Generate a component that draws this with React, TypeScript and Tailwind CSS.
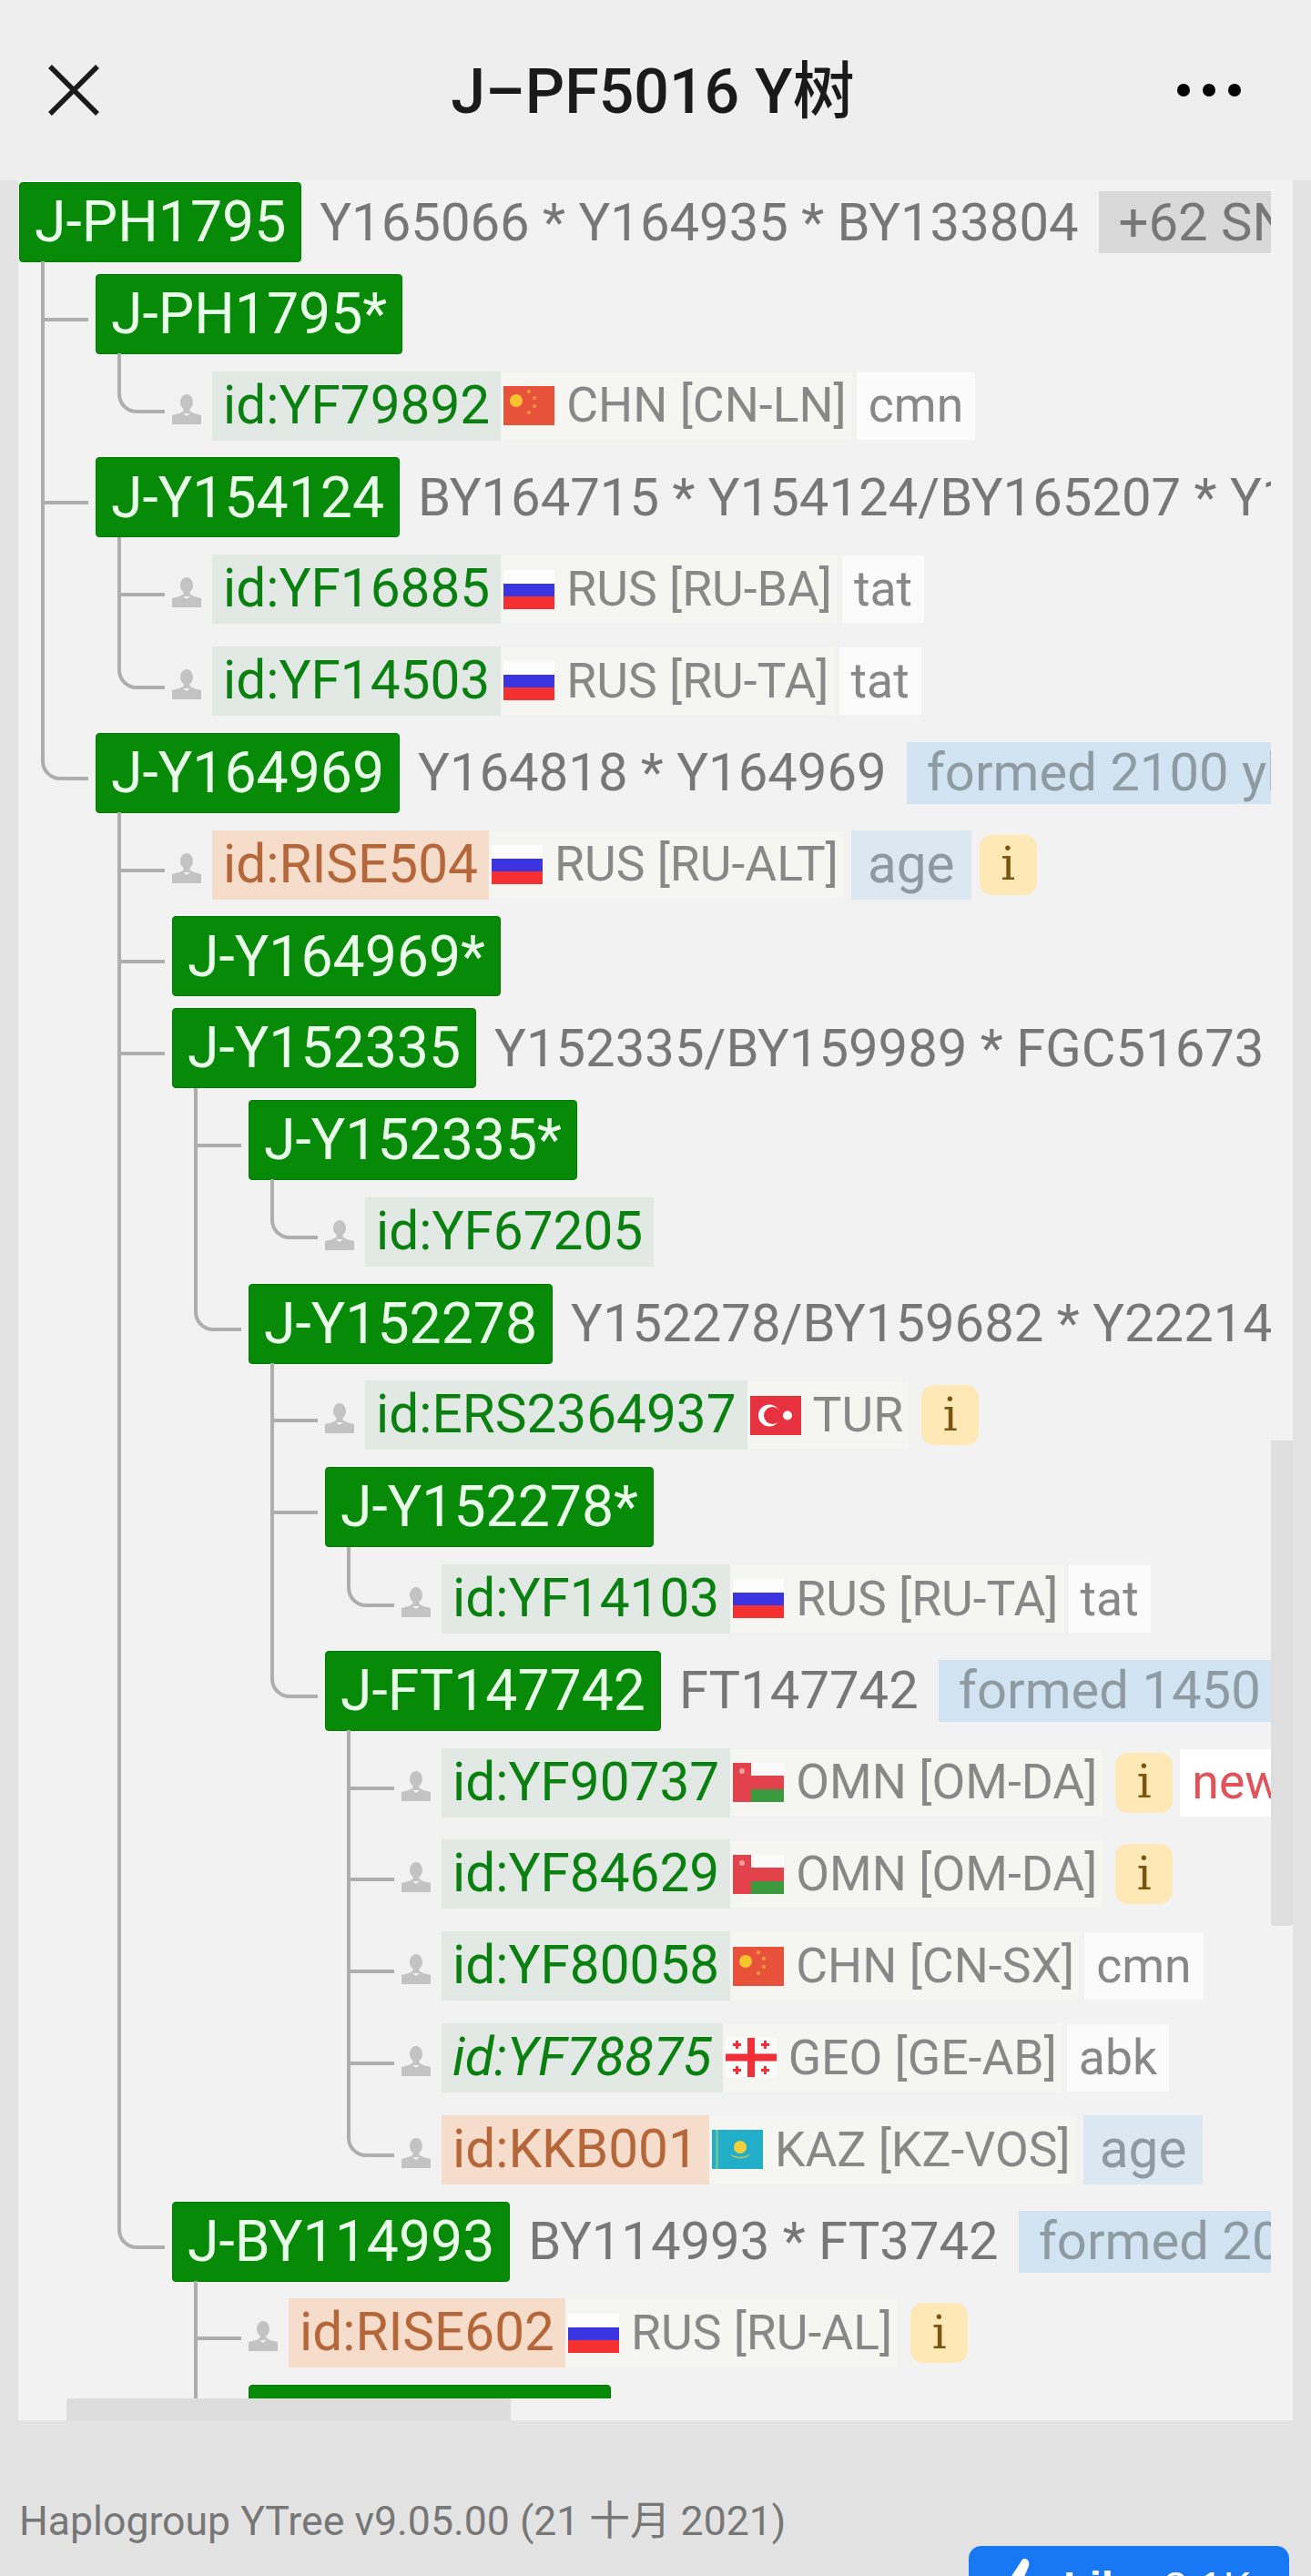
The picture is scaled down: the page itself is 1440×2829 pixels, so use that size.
import type { ReactNode } from "react";

type FlagName = "cn" | "ru" | "om" | "tr" | "ge" | "kz";

type Person = {
  id: string;
  tone?: "green" | "ancient";
  italic?: boolean;
  flag?: FlagName;
  country?: string;
  lang?: string;
  age?: boolean;
  info?: boolean;
  isNew?: boolean;
};

type Branch = {
  label: string;
  snps?: string;
  badge?: string;
  badgeGray?: boolean;
  kids?: TreeItem[];
};

type TreeItem = Branch | Person;

const tree: Branch = {
  label: "J-PH1795",
  snps: "Y165066 * Y164935 * BY133804",
  badge: "+62 SNPs",
  badgeGray: true,
  kids: [
    {
      label: "J-PH1795*",
      kids: [{ id: "id:YF79892", flag: "cn", country: "CHN [CN-LN]", lang: "cmn" }],
    },
    {
      label: "J-Y154124",
      snps: "BY164715 * Y154124/BY165207 * Y164971",
      kids: [
        { id: "id:YF16885", flag: "ru", country: "RUS [RU-BA]", lang: "tat" },
        { id: "id:YF14503", flag: "ru", country: "RUS [RU-TA]", lang: "tat" },
      ],
    },
    {
      label: "J-Y164969",
      snps: "Y164818 * Y164969",
      badge: "formed 2100 ybp",
      kids: [
        { id: "id:RISE504", tone: "ancient", flag: "ru", country: "RUS [RU-ALT]", age: true, info: true },
        { label: "J-Y164969*" },
        {
          label: "J-Y152335",
          snps: "Y152335/BY159989 * FGC51673",
          kids: [
            { label: "J-Y152335*", kids: [{ id: "id:YF67205" }] },
            {
              label: "J-Y152278",
              snps: "Y152278/BY159682 * Y22214",
              kids: [
                { id: "id:ERS2364937", flag: "tr", country: "TUR", info: true },
                {
                  label: "J-Y152278*",
                  kids: [{ id: "id:YF14103", flag: "ru", country: "RUS [RU-TA]", lang: "tat" }],
                },
                {
                  label: "J-FT147742",
                  snps: "FT147742",
                  badge: "formed 1450 ybp",
                  kids: [
                    { id: "id:YF90737", flag: "om", country: "OMN [OM-DA]", info: true, isNew: true },
                    { id: "id:YF84629", flag: "om", country: "OMN [OM-DA]", info: true },
                    { id: "id:YF80058", flag: "cn", country: "CHN [CN-SX]", lang: "cmn" },
                    { id: "id:YF78875", italic: true, flag: "ge", country: "GEO [GE-AB]", lang: "abk" },
                    { id: "id:KKB001", tone: "ancient", flag: "kz", country: "KAZ [KZ-VOS]", age: true },
                  ],
                },
              ],
            },
          ],
        },
        {
          label: "J-BY114993",
          snps: "BY114993 * FT3742",
          badge: "formed 2000 ybp",
          kids: [
            { id: "id:RISE602", tone: "ancient", flag: "ru", country: "RUS [RU-AL]", info: true },
            { label: "J-BY114993*" },
            { label: "J-BY114993.1" },
          ],
        },
      ],
    },
  ],
};

function Flag({ name }: { name: FlagName }) {
  return (
    <svg viewBox="0 0 56 43" className="h-[43px] w-[56px] flex-none">
      {name === "cn" && (
        <>
          <rect width="56" height="43" fill="#e8513a" />
          <circle cx="14" cy="16" r="7" fill="#f7c52e" />
          <circle cx="28" cy="6" r="2" fill="#f2a13a" />
          <circle cx="34" cy="13" r="2" fill="#f2a13a" />
          <circle cx="34" cy="22" r="2" fill="#f2a13a" />
          <circle cx="28" cy="29" r="2" fill="#f2a13a" />
        </>
      )}
      {name === "ru" && (
        <>
          <rect width="56" height="15" fill="#fdfdfd" />
          <rect y="15" width="56" height="14" fill="#3a35e0" />
          <rect y="29" width="56" height="14" fill="#f53030" />
        </>
      )}
      {name === "om" && (
        <>
          <rect width="56" height="14" fill="#fafafa" />
          <rect y="14" width="56" height="15" fill="#e2424c" />
          <rect y="29" width="56" height="14" fill="#3c9a3e" />
          <rect width="20" height="43" fill="#e2424c" />
          <circle cx="10" cy="9" r="3" fill="#f0a0a0" />
        </>
      )}
      {name === "tr" && (
        <>
          <rect width="56" height="43" fill="#e6323f" />
          <circle cx="21" cy="21.5" r="12" fill="#fff" />
          <circle cx="24.5" cy="21.5" r="9.5" fill="#e6323f" />
          <circle cx="41" cy="21.5" r="5" fill="#fff" />
        </>
      )}
      {name === "ge" && (
        <>
          <rect width="56" height="43" fill="#fbfbfb" />
          <rect x="24" width="8" height="43" fill="#f22f36" />
          <rect y="17.5" width="56" height="8" fill="#f22f36" />
          <path
            d="M11 3v3H8v3h3v3h3V9h3V6h-3V3zM42 3v3h-3v3h3v3h3V9h3V6h-3V3zM11 31v3H8v3h3v3h3v-3h3v-3h-3v-3zM42 31v3h-3v3h3v3h3v-3h3v-3h-3v-3z"
            fill="#f22f36"
          />
        </>
      )}
      {name === "kz" && (
        <>
          <rect width="56" height="43" fill="#22aec8" />
          <rect x="4" width="3" height="43" fill="#6cbf9a" />
          <circle cx="31" cy="19" r="7" fill="#f3cf3a" />
          <path d="M20 26c5 5 17 5 22 0-2 7-20 7-22 0z" fill="#bcc76a" />
        </>
      )}
    </svg>
  );
}

function PersonIcon() {
  return (
    <svg viewBox="0 0 32 33" className="mt-[7px] h-[33px] w-[32px] flex-none" fill="#c3c3c3">
      <path d="M16 0c4 0 7 4 7 9 0 3-1.500 5.500-3.500 7v2.500L24 21l8 2v10H0V23l8-2 4.500-2.500V16C10.500 14.500 9 12 9 9c0-5 3-9 7-9z" />
      <path d="M16 24l-4-3h8z" fill="#f2f2f2" />
    </svg>
  );
}

function Connector({ last, first }: { last: boolean; first: boolean }) {
  if (last) {
    return (
      <div className={`w-[60px] flex-none self-start ${first ? "-mt-[7px]" : ""}`}>
        <div
          className={`w-[52px] rounded-bl-[21px] border-b-4 border-l-4 border-[#aeaeae] ${first ? "h-[66px]" : "h-[59px]"}`}
        />
      </div>
    );
  }
  return (
    <div
      className={`flex w-[60px] flex-none items-center self-stretch border-l-4 border-[#aeaeae] ${first ? "-mt-[7px] pt-[19px]" : "pt-3"}`}
    >
      <div className="h-1 w-[48px] bg-[#aeaeae]" />
    </div>
  );
}

function Row({
  guides,
  depth,
  last,
  first,
  children,
}: {
  guides: boolean[];
  depth: number;
  last: boolean;
  first: boolean;
  children: ReactNode;
}) {
  return (
    <div className="flex h-[100.8px] w-max items-center pl-px whitespace-nowrap">
      {depth > 0 && <div className="w-6 flex-none" />}
      {guides.map((on, i) => (
        <div
          key={i}
          className={`w-[84px] flex-none self-stretch ${on ? "border-l-4 border-[#aeaeae]" : ""}`}
        />
      ))}
      {depth > 0 && <Connector last={last} first={first} />}
      {children}
    </div>
  );
}

function BranchLine({ item }: { item: Branch }) {
  return (
    <>
      <div className="flex h-[88px] flex-none items-center rounded-[4px] border border-[#007a00] bg-[#078a07] px-[16px] text-[62.5px] text-[#eaffea]">
        {item.label}
      </div>
      {item.snps && <span className="ml-[20px] text-[58px] text-[#777777]">{item.snps}</span>}
      {item.badge && (
        <span
          className={`ml-[22px] flex h-[68px] flex-none items-center px-[22px] text-[58px] ${item.badgeGray ? "bg-[#d9d9d9] text-[#777777]" : "bg-[#d2e4f1] text-[#8f9ba3]"}`}
        >
          {item.badge}
        </span>
      )}
    </>
  );
}

function PersonLine({ item }: { item: Person }) {
  const ancient = item.tone === "ancient";
  return (
    <>
      <PersonIcon />
      <span
        className={`ml-3 flex h-[76px] flex-none items-center px-[12px] text-[58.5px] ${ancient ? "bg-[#f5dccb] text-[#b5673a]" : "bg-[#e2e9e4] text-[#0a8010]"} ${item.italic ? "italic" : ""}`}
      >
        {item.id}
      </span>
      {item.flag && (
        <span className="flex h-[74px] flex-none items-center gap-[13px] bg-[#f5f5f2] pr-[6px] pl-[3px] text-[53.5px] text-[#888888]">
          <Flag name={item.flag} />
          {item.country}
        </span>
      )}
      {item.lang && (
        <span className="ml-[5px] flex h-[74px] flex-none items-center bg-[#fbfbfb] px-[13px] text-[53.5px] text-[#888888]">
          {item.lang}
        </span>
      )}
      {item.age && (
        <span className="ml-[8px] flex h-[76px] flex-none items-center bg-[#dce8f1] px-[18px] text-[58.5px] text-[#8d9aa3]">
          age
        </span>
      )}
      {item.info && (
        <span
          className={`flex h-[66px] w-[63px] flex-none items-center justify-center rounded-[14px] bg-[#fee8b5] font-[family-name:'DejaVu_Serif',serif] text-[50px] text-[#7a5510] ${item.age ? "ml-[9px]" : "ml-[14px]"}`}
        >
          i
        </span>
      )}
      {item.isNew && (
        <span className="ml-[8px] flex h-[74px] flex-none items-center bg-white px-[13px] text-[53.5px] text-[#e2525b]">
          new
        </span>
      )}
    </>
  );
}

// tree is flattened into fixed height rows, guide cells draw the vertical lines
function renderItem(
  item: TreeItem,
  depth: number,
  guides: boolean[],
  last: boolean,
  first: boolean,
): ReactNode {
  if ("id" in item) {
    return (
      <Row key={item.id} guides={guides} depth={depth} last={last} first={first}>
        <PersonLine item={item} />
      </Row>
    );
  }
  const kidGuides = depth > 0 ? [...guides, !last] : [];
  const kids = item.kids ?? [];
  return [
    <Row key={item.label} guides={guides} depth={depth} last={last} first={first}>
      <BranchLine item={item} />
    </Row>,
    ...kids.map((kid, i) =>
      renderItem(kid, depth + 1, kidGuides, i === kids.length - 1, i === 0),
    ),
  ];
}

export default function App() {
  return (
    <div className="h-[2829px] w-[1440px] overflow-hidden bg-[#e3e3e3] font-[family-name:Roboto,'Noto_Sans_CJK_SC',sans-serif]">
      <header className="flex h-[198px] items-center justify-between bg-[#eeeeee] pr-[77px] pl-[53px]">
        <svg viewBox="0 0 56 56" className="h-[56px] w-[56px]" stroke="#1a1a1a" strokeWidth="5.5" fill="none">
          <path d="M2 2l52 52M54 2L2 54" />
        </svg>
        <h1 className="mt-1 ml-8 text-[68px] font-medium text-[#1a1a1a]">J–PF5016 Y树</h1>
        <div className="flex gap-[14px]">
          <div className="h-[14px] w-[14px] rounded-full bg-black" />
          <div className="h-[14px] w-[14px] rounded-full bg-black" />
          <div className="h-[14px] w-[14px] rounded-full bg-black" />
        </div>
      </header>

      <div className="mx-[20px] flex h-[2460px] bg-[#f2f2f2]">
        <div className="flex w-[1376px] flex-none flex-col">
          <div className="h-[2436px] flex-none overflow-hidden">
            <div className="-mt-[4.4px]">{renderItem(tree, 0, [], false, false)}</div>
          </div>
          <div className="ml-[53px] h-[24px] w-[488px] rounded-t-[3px] bg-[#dddddd]" />
        </div>
        <div className="w-[24px] flex-none pt-[1384px]">
          <div className="h-[533px] rounded-b-[3px] bg-[#dedede]" />
        </div>
      </div>

      <footer className="h-[171px] overflow-hidden pt-[83px] pl-[21px]">
        <p className="h-[55px] text-[44.6px] leading-[57px] text-[#777777]">
          Haplogroup YTree v9.05.00 (21 十月 2021)
        </p>
        <div className="mr-[24px] ml-auto flex h-[70px] w-[352px] items-start rounded-t-[14px] bg-[#1877f2] pt-[10px] pl-[31px] font-[family-name:'Liberation_Sans',sans-serif] text-[47px] text-white">
          <svg viewBox="0 0 48 50" className="mt-[4px] h-[50px] w-[48px] flex-none" fill="#ffffff">
            <path d="M30 0c4 0 6 3 5 8l-5 12h14c3 0 4 3 4 5l-5 22c-1 2-2 3-4 3H14V22L26 4c1-2 2-4 4-4zM0 22h10v28H0z" />
          </svg>
          <span className="ml-[25px] font-bold">Like</span>
          <span className="ml-[16px]">2.1K</span>
        </div>
      </footer>
    </div>
  );
}
